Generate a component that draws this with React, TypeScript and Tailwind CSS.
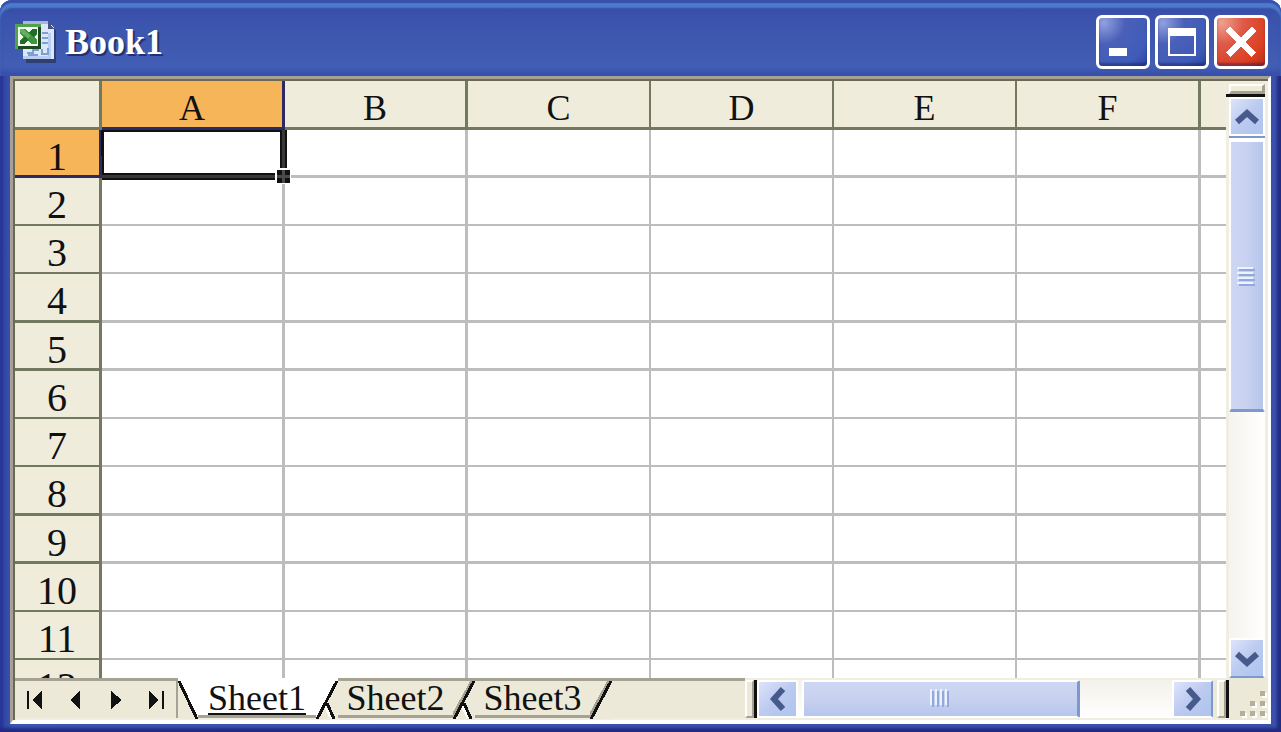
import React from "react";

const columns = [
  { name: "A", width: "w-[183px]", line: "border-r-3" },
  { name: "B", width: "w-[183px]", line: "border-r-3" },
  { name: "C", width: "w-[183px]", line: "border-r-2" },
  { name: "D", width: "w-[183px]", line: "border-r-2" },
  { name: "E", width: "w-[183px]", line: "border-r-2" },
  { name: "F", width: "w-[184px]", line: "border-r-3" },
  { name: "", width: "w-[183px]", line: "border-r-3" },
];
const rows = Array.from({ length: 12 }, (_, i) => i + 1);

function BookIcon() {
  return (
    <svg width="42" height="42" viewBox="0 0 42 42" aria-hidden="true" shapeRendering="crispEdges">
      <path d="M11 3h24l6 7v32H11z" fill="#2f3f70" />
      <path d="M8 0h25l6 7v31H8z" fill="#dce7fa" />
      <path d="M8 0h25v3H8z" fill="#aab4d8" />
      <path d="M33 0v8h6z" fill="#46537f" />
      <path d="M36 12v26H8v-3h25V12z" fill="#b9cdf2" />
      <path d="M27 12h6M27 17h6M27 22h6M12 32h6v-3h6M13 34h10M27 28v5h6v-6" fill="none" stroke="#7f9fd0" strokeWidth="2" />
      <path d="M0 3h26v25H0z" fill="#2f7a33" />
      <path d="M0 3h26v3H3v22H0z" fill="#4fa34c" />
      <path d="M23 6h3v22H3v-3h20z" fill="#1d4a20" />
      <path d="M3 6h20v19H3z" fill="#f4faf1" />
      <path d="M5 8h6l3 4 3-4h5v5l-3 3 3 3v4h-6l-3-4-3 4H5v-4l3-3-3-3z" fill="#3f9440" />
      <path d="M14 12l3-4h5v4l-4 4zM5 23v-3l5-5 3 4-3 4z" fill="#226b2b" />
      <path d="M5 8h4l6 7-2 2-8-6z" fill="#62b25c" />
    </svg>
  );
}

function CaptionButton({ label, red, children }: { label: string; red?: boolean; children: React.ReactNode }) {
  return (
    <button
      aria-label={label}
      className={
        "flex h-[54px] w-[54px] items-center justify-center rounded-md border-3 border-white shadow-[inset_0_-3px_2px_rgba(20,20,90,0.4)] " +
        (red
          ? "bg-[radial-gradient(circle_at_10%_10%,#f0a090,#de5a48_35%,#dc3f20_75%,#b52a18)]"
          : "bg-[radial-gradient(circle_at_10%_10%,#92a0e0,#4a60b8_35%,#3f5cb8_75%,#2c42a0)]")
      }
    >
      <svg width="48" height="48" viewBox="0 0 48 48" fill="none" shapeRendering="crispEdges">
        {children}
      </svg>
    </button>
  );
}

function ScrollButton({ label, d, className }: { label: string; d: string; className: string }) {
  return (
    <button
      aria-label={label}
      className={
        "flex shrink-0 items-center justify-center rounded-xs border-2 border-white bg-linear-to-br from-[#dde4fa] via-[#bccaf0] to-[#adc4ef] " +
        className
      }
    >
      <svg width="24" height="24" viewBox="0 0 24 24" fill="none" stroke="#465a8c" strokeWidth="6" aria-hidden="true">
        <path d={d} />
      </svg>
    </button>
  );
}

function NavButton({ label, children }: { label: string; children: React.ReactNode }) {
  return (
    <button aria-label={label} className="flex h-full flex-1 items-center justify-center">
      <svg width="18" height="20" viewBox="0 0 18 20" fill="#111" shapeRendering="crispEdges">
        {children}
      </svg>
    </button>
  );
}

function TabEdge({ leftFill, rightFill, joined }: { leftFill: string; rightFill: string; joined?: boolean }) {
  return (
    <svg width="22" height="38" viewBox="0 0 22 38" className="shrink-0" aria-hidden="true" shapeRendering="crispEdges">
      <path d="M0 0h22L1 38H0z" fill={leftFill} />
      <path d="M22 0v38H1z" fill={rightFill} />
      {leftFill !== "#ffffff" && <path d="M19 0L-2 38" stroke="#a5a294" strokeWidth="3" />}
      {joined && <path d="M9 24L15 37" stroke="#fff" strokeWidth="3" />}
      {joined && <path d="M11 22L18 38" stroke="#111" strokeWidth="3" />}
      <path d="M21 0L1 38" stroke="#111" strokeWidth="3" />
    </svg>
  );
}

function Tab({ name, active }: { name: string; active?: boolean }) {
  return (
    <button
      className={
        "flex h-full shrink-0 items-end justify-center border-b-3 border-[#a5a294] text-4xl leading-[34px] " +
        (active ? "w-[118px] bg-white underline decoration-2 underline-offset-3" : "w-[115px]")
      }
    >
      {name}
    </button>
  );
}

function SplitHandle() {
  return (
    <div className="h-full w-3 shrink-0 border-r-3 border-[#111]">
      <div className="h-full border-2 border-t-white border-r-[#a5a294] border-b-[#a5a294] border-l-white bg-[#ece9d8]" />
    </div>
  );
}

function Sheet() {
  return (
    <div className="min-w-0 flex-1 overflow-hidden bg-white">
      <table className="w-[1369px] table-fixed border-separate border-spacing-0 text-center">
        <colgroup>
          <col className="w-[87px]" />
          {columns.map((c, i) => (
            <col key={i} className={c.width} />
          ))}
        </colgroup>
        <thead>
          <tr className="h-[49px] text-4xl leading-[36px]">
            <td className="border-r-3 border-b-3 border-[#737860] bg-[#efecdc] p-0" />
            {columns.map((c, i) => (
              <th
                key={i}
                scope="col"
                className={
                  "border-b-3 p-0 pt-2 font-normal " +
                  c.line +
                  (i === 0 ? " border-[#2a2b62] bg-[#f7b55a]" : " border-[#737860] bg-[#efecdc]")
                }
              >
                {c.name}
              </th>
            ))}
          </tr>
        </thead>
        <tbody>
          {rows.map((n) => {
            const line = n % 4 < 2 ? "border-b-3" : "border-b-2";
            return (
              <tr key={n} className={n % 4 === 0 ? "h-[49px]" : "h-[48px]"}>
                <th
                  scope="row"
                  className={
                    "border-r-3 p-0 pt-2 text-[40px] leading-[36px] font-normal " +
                    line +
                    (n === 1 ? " border-[#2a2b62] bg-[#f7b55a]" : " border-[#737860] bg-[#efecdc]")
                  }
                >
                  {n}
                </th>
                {columns.map((c, i) => (
                  <td key={i} className={"relative border-[#bdbdbd] p-0 " + c.line + " " + line}>
                    {n === 1 && i === 0 && (
                      <svg
                        className="absolute top-0 left-0 z-10 overflow-visible"
                        width="186"
                        height="51"
                        viewBox="0 0 186 51"
                        shapeRendering="crispEdges"
                        aria-hidden="true"
                      >
                        <path d="M-1 0h186v38h-7V2H2v41h171v7H0z" fill="#111" />
                        <path d="M180 0h3v38h-3zM0 45h173v3H0z" fill="#383838" />
                        <path d="M173 38h16v16h-16z" fill="#fff" />
                        <path d="M175 40h13v13h-13z" fill="#111" />
                        <path d="M180 40h3v13h-3zM175 45h13v3h-13z" fill="#4a4a4a" />
                      </svg>
                    )}
                  </td>
                ))}
              </tr>
            );
          })}
        </tbody>
      </table>
    </div>
  );
}

export default function App() {
  return (
    <div className="h-screen bg-white font-['Liberation_Serif',serif] text-[#111]">
      <div className="flex h-full flex-col rounded-t-xl bg-[#3850ac] bg-linear-to-r from-[#2d3f9e] via-[#3b55b0] via-1% to-[#3a50ac] px-[10px] pb-2 shadow-[inset_-4px_-4px_3px_#232b80,inset_3px_0_2px_#26379a]">
        <header className="-mx-[10px] flex h-[76px] shrink-0 items-center rounded-t-xl bg-linear-to-b from-[#3146a4] via-[#3a52ab] via-20% to-[#4460b6] pt-2 pr-[13px] pl-[15px] shadow-[inset_0_3px_1px_#3850ac,inset_0_8px_2px_#4d7bca,inset_0_-6px_4px_#3850ac]">
          <BookIcon />
          <h1 className="ml-2 flex-1 text-4xl leading-[40px] font-bold text-white [text-shadow:2px_2px_0_#26306e]">Book1</h1>
          <div className="flex gap-[5px]">
            <CaptionButton label="Minimize">
              <path d="M10 30h18v8H10z" fill="#fff" />
            </CaptionButton>
            <CaptionButton label="Maximize">
              <path d="M10 10h28v28H10zM12 18v18h24V18z" fill="#fff" fillRule="evenodd" />
            </CaptionButton>
            <CaptionButton label="Close" red>
              <path d="M11 11L37 37M37 11L11 37" stroke="#fff" strokeWidth="6" />
            </CaptionButton>
          </div>
        </header>

        <main className="flex min-h-0 flex-1 flex-col border-t-3 border-r-3 border-b-4 border-l-3 border-t-[#a5a294] border-r-white border-b-white border-l-[#a5a294]">
          <div className="flex min-h-0 flex-1 flex-col border-t-2 border-l-2 border-[#6b6956]">
            <div className="flex min-h-0 flex-1">
              <Sheet />
              <div className="flex w-[42px] shrink-0 flex-col border-x-3 border-[#efeee0] bg-linear-to-r from-[#f5f3ee] to-white">
                <div className="-ml-[3px] h-4 shrink-0 border-b-3 border-[#111] bg-[#efecdc] pt-[3px] pl-[3px]">
                  <div className="h-full border-t-2 border-r-3 border-b-3 border-l-2 border-t-white border-r-[#a5a294] border-b-[#a5a294] border-l-white" />
                </div>
                <ScrollButton label="Scroll up" d="M2 17l10-9 10 9" className="h-[39px] w-full" />
                <div className="h-1 shrink-0 border-b-2 border-white bg-[#7d98cc]" />
                <div className="flex h-[272px] w-full shrink-0 flex-col items-center justify-center gap-[3px] rounded-xs border-2 border-b-3 border-white border-b-[#7d98cc] bg-linear-to-r from-[#cdd6f2] via-[#c8d1ef] to-[#b6c6ec] pt-1">
                  {[0, 1, 2, 3].map((i) => (
                    <div key={i} className="h-[2px] w-4 bg-[#91a8dc] shadow-[-2px_-2px_0_#edf2ff]" />
                  ))}
                </div>
                <div className="flex-1" />
                <ScrollButton label="Scroll down" d="M2 8l10 9 10-9" className="h-[40px] w-full border-b-[#7d98cc]" />
              </div>
            </div>

            <footer className="flex h-[42px] shrink-0 bg-[#ece9d8]">
              <div className="flex flex-1 border-b-2 border-[#efeee0]">
                <div className="flex w-[163px] shrink-0 border-t-3 border-r-2 border-[#a5a294]">
                  <NavButton label="First sheet">
                    <path d="M1 1h2v18H1zM16 1v18L6 10z" />
                  </NavButton>
                  <NavButton label="Previous sheet">
                    <path d="M14 1v18L4 10z" />
                  </NavButton>
                  <NavButton label="Next sheet">
                    <path d="M4 1v18l11-9z" />
                  </NavButton>
                  <NavButton label="Last sheet">
                    <path d="M2 1v18l10-9zM15 1h2v18h-2z" />
                  </NavButton>
                </div>
                <div className="flex bg-white pt-[3px]">
                  <svg width="20" height="38" viewBox="0 0 20 38" className="shrink-0" shapeRendering="crispEdges" aria-hidden="true">
                    <path d="M0 0v38h20z" fill="#ece9d8" />
                    <path d="M1 0l18 38" stroke="#111" strokeWidth="3" />
                  </svg>
                  <Tab name="Sheet1" active />
                  <TabEdge leftFill="#ffffff" rightFill="#ece9d8" joined />
                </div>
                <div className="flex min-w-0 flex-1 border-t-3 border-[#a5a294]">
                  <Tab name="Sheet2" />
                  <TabEdge leftFill="#ece9d8" rightFill="#ece9d8" joined />
                  <Tab name="Sheet3" />
                  <TabEdge leftFill="#ece9d8" rightFill="#ece9d8" />
                </div>
              </div>
              <div className="flex w-[484px] shrink-0 border-y-2 border-[#efeee0] bg-linear-to-b from-[#f3f1ea] to-white">
                <SplitHandle />
                <ScrollButton label="Scroll left" d="M17 2L8 12l9 10" className="h-full w-[41px]" />
                <div className="ml-1 flex h-full w-[278px] shrink-0 items-center justify-center gap-[3px] rounded-xs border-2 border-r-3 border-white border-r-[#7d98cc] bg-linear-to-b from-[#cdd6f2] via-[#c8d1ef] to-[#b6c6ec]">
                  {[0, 1, 2, 3].map((i) => (
                    <div key={i} className="h-4 w-[2px] bg-[#91a8dc] shadow-[-2px_-2px_0_#edf2ff]" />
                  ))}
                </div>
                <div className="flex-1" />
                <ScrollButton label="Scroll right" d="M7 2l9 10-9 10" className="h-full w-[41px] border-r-[#7d98cc]" />
                <div className="w-1 bg-[#ece9d8]" />
                <SplitHandle />
              </div>
              <svg width="39" height="42" viewBox="0 0 39 42" className="shrink-0" shapeRendering="crispEdges" aria-hidden="true">
                <path d="M33 15h5v5h-5zM23 25h5v5h-5zM33 25h5v5h-5zM13 35h5v5h-5zM23 35h5v5h-5zM33 35h5v5h-5z" fill="#fff" />
                <path d="M31 13h5v5h-5zM21 23h5v5h-5zM31 23h5v5h-5zM11 33h5v5h-5zM21 33h5v5h-5zM31 33h5v5h-5z" fill="#b3af99" />
              </svg>
            </footer>
          </div>
        </main>
      </div>
    </div>
  );
}
